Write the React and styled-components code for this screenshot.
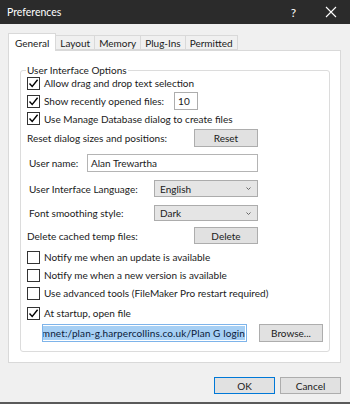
import styled, { createGlobalStyle } from "styled-components";

const GlobalStyle = createGlobalStyle`
  html, body {
    margin: 0;
    padding: 0;
  }
  body {
    font-family: Lato, "Noto Sans", sans-serif;
    font-size: 10px;
    color: #1a1a1a;
  }
`;

const TABS = ["General", "Layout", "Memory", "Plug-Ins", "Permitted"];

const CheckIcon = () => (
  <svg width="11" height="11" viewBox="0 0 11 11">
    <path d="M1.5 5.5 L4.2 8.4 L9.6 1.8" fill="none" stroke="#000" strokeWidth="1.4" />
  </svg>
);

const Chevron = () => (
  <svg width="5" height="3" viewBox="0 0 5 3">
    <path d="M0.5 0.5 L2.5 2.5 L4.5 0.5" fill="none" stroke="#666" strokeWidth="1" />
  </svg>
);

const CheckRow = ({ checked, label, children, $mt }) => (
  <Row $h={18} $mt={$mt}>
    <Box>{checked && <CheckIcon />}</Box>
    <span>{label}</span>
    {children}
  </Row>
);

export default function App() {
  return (
    <>
      <GlobalStyle />
      <Window>
        <TitleBar>
          <span>Preferences</span>
          <TitleButtons>
            <span>?</span>
            <svg width="12" height="12" viewBox="0 0 12 12">
              <path d="M1 1 L11 11 M11 1 L1 11" stroke="#fff" strokeWidth="1.1" />
            </svg>
          </TitleButtons>
        </TitleBar>

        <Body>
          <TabStrip>
            {TABS.map((t, i) => (
              <Tab key={t} $active={i === 0}>
                {t}
              </Tab>
            ))}
          </TabStrip>

          <Panel>
            <Group>
              <GroupLabel>User Interface Options</GroupLabel>

              <CheckRow checked label="Allow drag and drop text selection" />
              <CheckRow checked label="Show recently opened files:">
                <SmallInput>10</SmallInput>
              </CheckRow>
              <Row $h={17}>
                <Box>
                  <CheckIcon />
                </Box>
                <span>Use Manage Database dialog to create files</span>
              </Row>

              <FormRow $h={18} $mt={2}>
                <span>Reset dialog sizes and positions:</span>
                <Button $w={64}>Reset</Button>
              </FormRow>

              <FormRow $h={18} $mt={7} $indent={2}>
                <span>User name:</span>
                <TextInput $w={171}>Alan Trewartha</TextInput>
              </FormRow>

              <FormRow $h={17} $mt={8} $indent={2}>
                <span>User Interface Language:</span>
                <Select $w={104}>
                  <span>English</span>
                  <Chevron />
                </Select>
              </FormRow>

              <FormRow $h={16} $mt={8} $indent={2}>
                <span>Font smoothing style:</span>
                <Select $w={104}>
                  <span>Dark</span>
                  <Chevron />
                </Select>
              </FormRow>

              <FormRow $h={17} $mt={6}>
                <span>Delete cached temp files:</span>
                <Button $w={64}>Delete</Button>
              </FormRow>

              <CheckRow $mt={4} label="Notify me when an update is available" />
              <CheckRow label="Notify me when a new version is available" />
              <CheckRow label="Use advanced tools (FileMaker Pro restart required)" />
              <CheckRow $mt={2} checked label="At startup, open file" />

              <PathRow>
                <PathInput>
                  <Selected>fmnet:/plan-g.harpercollins.co.uk/Plan G login</Selected>
                </PathInput>
                <Button $w={64}>Browse...</Button>
              </PathRow>
            </Group>
          </Panel>

          <Footer>
            <Button $w={61} $default>
              OK
            </Button>
            <Button $w={61}>Cancel</Button>
          </Footer>
        </Body>
      </Window>
    </>
  );
}

const Window = styled.div`
  width: 350px;
  height: 404px;
  display: flex;
  flex-direction: column;
  box-sizing: border-box;
  border-bottom: 2px solid #5a5a5a;
  background: #f0f0f0;
`;

const TitleBar = styled.div`
  height: 24px;
  flex-shrink: 0;
  background: #2b2b2b;
  color: #fff;
  display: flex;
  align-items: center;
  justify-content: space-between;
  padding: 0 13px 0 7px;
  font-size: 10.5px;
`;

const TitleButtons = styled.div`
  display: flex;
  align-items: center;
  gap: 29px;

  & > span {
    font-size: 12px;
  }
`;

const Body = styled.div`
  flex: 1;
  display: flex;
  flex-direction: column;
  padding: 9px 9px 0 8px;
`;

const TabStrip = styled.div`
  display: flex;
  align-items: flex-end;
  height: 17px;
  position: relative;
  z-index: 1;
`;

const Tab = styled.div`
  box-sizing: border-box;
  height: ${(p) => (p.$active ? "18px" : "15px")};
  margin-bottom: ${(p) => (p.$active ? "-1px" : "0")};
  padding: 0 ${(p) => (p.$active ? "6px" : "4px")};
  display: flex;
  align-items: center;
  background: ${(p) => (p.$active ? "#fff" : "#f0f0f0")};
  border: 1px solid #d9d9d9;
  border-bottom: ${(p) => (p.$active ? "none" : "1px solid #d9d9d9")};
  margin-left: -1px;

  &:first-child {
    margin-left: 0;
  }
`;

const Panel = styled.div`
  box-sizing: border-box;
  height: 313px;
  background: #fff;
  border: 1px solid #d9d9d9;
  padding: 19px 10px 0 11px;
`;

const Group = styled.div`
  position: relative;
  box-sizing: border-box;
  height: 282px;
  border: 1px solid #dcdcdc;
  border-radius: 3px;
  padding: 3px 6px 0 6px;
  display: flex;
  flex-direction: column;
`;

const GroupLabel = styled.span`
  position: absolute;
  left: 5px;
  top: -8px;
  padding: 0 1px;
  background: #fff;
  line-height: 14px;
`;

const Row = styled.div`
  height: ${(p) => p.$h}px;
  margin-top: ${(p) => p.$mt || 0}px;
  display: flex;
  align-items: center;
  gap: 4px;
  flex-shrink: 0;
`;

const FormRow = styled(Row)`
  width: 231px;
  justify-content: space-between;
  gap: 0;

  & > span {
    padding-left: ${(p) => p.$indent || 0}px;
  }
`;

const Box = styled.div`
  box-sizing: border-box;
  width: 13px;
  height: 13px;
  border: 1px solid #333;
  background: #fff;
  display: flex;
  align-items: center;
  justify-content: center;
`;

const SmallInput = styled.div`
  box-sizing: border-box;
  width: 24px;
  height: 18px;
  margin-left: 6px;
  border: 1px solid #adadad;
  padding-left: 3px;
  display: flex;
  align-items: center;
`;

const TextInput = styled.div`
  box-sizing: border-box;
  width: ${(p) => p.$w}px;
  height: 18px;
  border: 1px solid #b4b4b4;
  padding-left: 3px;
  display: flex;
  align-items: center;
`;

const Select = styled.div`
  box-sizing: border-box;
  width: ${(p) => p.$w}px;
  height: 100%;
  background: #e5e5e5;
  border: 1px solid #acacac;
  padding: 0 6px 0 5px;
  display: flex;
  align-items: center;
  justify-content: space-between;
`;

const Button = styled.div`
  box-sizing: border-box;
  width: ${(p) => p.$w}px;
  height: 100%;
  background: #e1e1e1;
  border: 1px solid ${(p) => (p.$default ? "#0078d7" : "#adadad")};
  display: flex;
  align-items: center;
  justify-content: center;
`;

const PathRow = styled.div`
  height: 18px;
  margin-top: 2px;
  padding-left: 15px;
  display: flex;
  gap: 12px;
  flex-shrink: 0;
`;

const PathInput = styled.div`
  box-sizing: border-box;
  width: 205px;
  border: 1px solid #7eb4ea;
  background: #fff;
  overflow: hidden;
  display: flex;
  justify-content: flex-end;
  align-items: center;
  padding: 1px;
`;

const Selected = styled.span`
  white-space: nowrap;
  background: #a6cff4;
  color: #0a1a3a;
  line-height: 14px;
  letter-spacing: 0.12px;
`;

const Footer = styled.div`
  display: flex;
  justify-content: flex-end;
  gap: 5px;
  height: 17px;
  margin-top: 14px;
`;
